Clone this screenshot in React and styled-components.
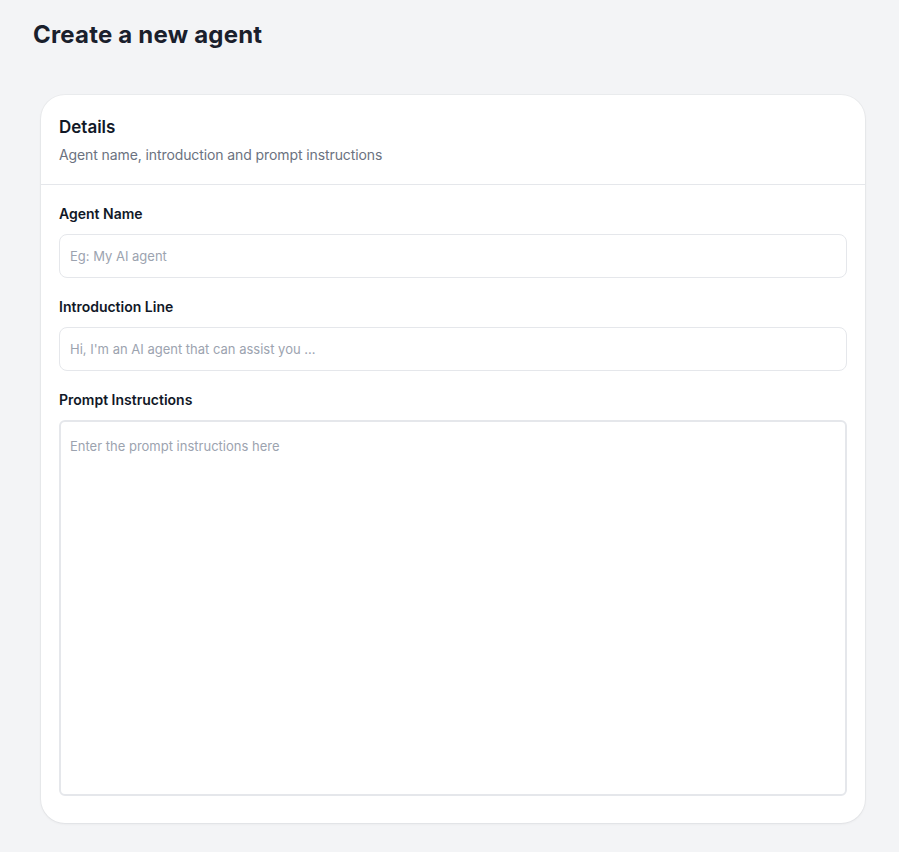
import React from "react";
import styled, { createGlobalStyle } from "styled-components";

const Global = createGlobalStyle`
  html, body { margin: 0; padding: 0; background: #f3f4f6; }
  body { font-family: Inter, "Noto Sans", sans-serif; color: #111827; }
  * { box-sizing: border-box; }
`;

const Page = styled.div`
  height: 852px;
  padding: 20px 34px 29px 33px;
  display: flex;
  flex-direction: column;
`;

const Title = styled.h1`
  margin: 0;
  font-size: 24px;
  line-height: 30px;
  font-weight: 700;
  color: #1a202c;
  letter-spacing: 0.2px;
`;

const Card = styled.section`
  margin: 45px 0 0 8px;
  background: #fff;
  border-radius: 24px;
  box-shadow: 0 1px 3px rgba(15, 23, 42, 0.06), 0 0 0 1px rgba(15, 23, 42, 0.03);
  display: flex;
  flex-direction: column;
  flex: 1;
  min-height: 0;
`;

const CardHeader = styled.header`
  padding: 20px 18px 19px;
  border-bottom: 1px solid #e5e7eb;
  display: flex;
  flex-direction: column;
  gap: 6px;
`;

const CardTitle = styled.h2`
  margin: 0;
  font-size: 17px;
  line-height: 24px;
  font-weight: 600;
  color: #111827;
`;

const CardSub = styled.p`
  margin: 0;
  font-size: 14px;
  line-height: 20px;
  color: #6b7280;
  letter-spacing: -0.1px;
`;

const CardBody = styled.div`
  padding: 20px 18px 27px;
  display: flex;
  flex-direction: column;
  gap: 20px;
  flex: 1;
  min-height: 0;
`;

const Field = styled.label`
  display: flex;
  flex-direction: column;
  gap: 11px;
  flex: ${(p) => (p.$grow ? 1 : "none")};
  min-height: 0;
`;

const Label = styled.span`
  font-size: 14px;
  line-height: 18px;
  font-weight: 600;
  color: #111827;
`;

const Input = styled.input`
  height: 44px;
  border: 1px solid #e5e7eb;
  border-radius: 8px;
  padding: 0 10px;
  font: inherit;
  font-size: 13px;
  color: #111827;
  outline: none;
  &::placeholder { color: #9ca3af; }
`;

const TextArea = styled.textarea`
  flex: 1;
  min-height: 0;
  border: 2px solid #e5e7eb;
  border-radius: 6px;
  padding: 16px 9px;
  font: inherit;
  font-size: 13px;
  color: #111827;
  resize: none;
  outline: none;
  &::placeholder { color: #9ca3af; }
`;

export default function App() {
  return (
    <>
      <Global />
      <Page>
        <Title>Create a new agent</Title>
        <Card>
          <CardHeader>
            <CardTitle>Details</CardTitle>
            <CardSub>Agent name, introduction and prompt instructions</CardSub>
          </CardHeader>
          <CardBody>
            <Field>
              <Label>Agent Name</Label>
              <Input placeholder="Eg: My AI agent" />
            </Field>
            <Field>
              <Label>Introduction Line</Label>
              <Input placeholder="Hi, I'm an AI agent that can assist you ..." />
            </Field>
            <Field $grow>
              <Label>Prompt Instructions</Label>
              <TextArea placeholder="Enter the prompt instructions here" />
            </Field>
          </CardBody>
        </Card>
      </Page>
    </>
  );
}
